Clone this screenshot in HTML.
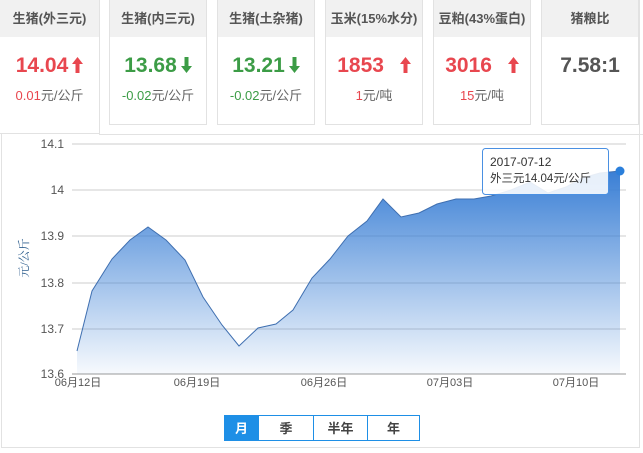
<!DOCTYPE html>
<html><head><meta charset="utf-8"><style>
body{margin:0;width:643px;height:453px;background:#fff;font-family:"Liberation Sans","Microsoft YaHei","Noto Sans CJK SC",sans-serif;position:relative;overflow:hidden}
.card{position:absolute;top:0;height:125px;width:98px;border:1px solid #e2e2e2;border-top:none;box-sizing:border-box;background:#fff;text-align:center}
.card .h{height:37px;background:#f1f1f1;line-height:37px;font-size:13px;font-weight:bold;color:#555}
.card .v{font-size:21px;font-weight:bold;margin-top:16px;height:26px;line-height:26px}
.card .v svg{vertical-align:-1px;margin-left:4px}
.card .s{font-size:13px;color:#666;margin-top:6px}
.r{color:#e8474f}.g{color:#3c9c46}
.btn{position:absolute;top:415px;height:26px;line-height:26px;text-align:center;font-size:13px;font-weight:bold;color:#444;border:1px solid #1e8fe6;box-sizing:border-box;background:#fff}
</style></head><body>
<div style="position:absolute;left:1px;top:0;width:639px;height:448px;border:1px solid #e2e2e2;border-top:none;box-sizing:border-box"></div>
<div style="position:absolute;left:99px;top:134px;width:544px;height:1px;background:#e2e2e2"></div>
<div class="card" style="left:0;width:100px;height:134px;border-left:none"><div class="h">生猪(外三元)</div><div class="v r">14.04<svg width="11" height="16" viewBox="0 0 11 16"><path d="M5.5,0 L11,7 L7.5,7 L7.5,16 L3.5,16 L3.5,7 L0,7 Z" fill="#e8474f"/></svg></div><div class="s"><span class="r">0.01</span>元/公斤</div></div>
<div class="card" style="left:109px"><div class="h">生猪(内三元)</div><div class="v g">13.68<svg width="11" height="16" viewBox="0 0 11 16"><path d="M5.5,16 L11,9 L7.5,9 L7.5,0 L3.5,0 L3.5,9 L0,9 Z" fill="#3c9c46"/></svg></div><div class="s"><span class="g">-0.02</span>元/公斤</div></div>
<div class="card" style="left:217px"><div class="h">生猪(土杂猪)</div><div class="v g">13.21<svg width="11" height="16" viewBox="0 0 11 16"><path d="M5.5,16 L11,9 L7.5,9 L7.5,0 L3.5,0 L3.5,9 L0,9 Z" fill="#3c9c46"/></svg></div><div class="s"><span class="g">-0.02</span>元/公斤</div></div>
<div class="card" style="left:325px"><div class="h">玉米(15%水分)</div><div class="v r">1853 <svg width="11" height="16" viewBox="0 0 11 16" style="margin-left:10px"><path d="M5.5,0 L11,7 L7.5,7 L7.5,16 L3.5,16 L3.5,7 L0,7 Z" fill="#e8474f"/></svg></div><div class="s"><span class="r">1</span>元/吨</div></div>
<div class="card" style="left:433px"><div class="h">豆粕(43%蛋白)</div><div class="v r">3016 <svg width="11" height="16" viewBox="0 0 11 16" style="margin-left:10px"><path d="M5.5,0 L11,7 L7.5,7 L7.5,16 L3.5,16 L3.5,7 L0,7 Z" fill="#e8474f"/></svg></div><div class="s"><span class="r">15</span>元/吨</div></div>
<div class="card" style="left:541px"><div class="h">猪粮比</div><div class="v" style="color:#555">7.58:1</div></div>
<svg style="position:absolute;left:0;top:0" width="643" height="453" font-family="Liberation Sans, Noto Sans CJK SC, sans-serif">
<defs><linearGradient id="gr" x1="0" y1="0" x2="0" y2="1"><stop offset="0" stop-color="#3a7fd5"/><stop offset="1" stop-color="#3a7fd5" stop-opacity="0.04"/></linearGradient></defs>
<g stroke="#d8d8d8" stroke-width="1.3">
<line x1="72" y1="144" x2="626" y2="144"/><line x1="72" y1="190" x2="626" y2="190"/><line x1="72" y1="236" x2="626" y2="236"/><line x1="72" y1="283" x2="626" y2="283"/><line x1="72" y1="329" x2="626" y2="329"/><line x1="72" y1="374" x2="626" y2="374" stroke="#ccc" stroke-width="2"/>
</g>
<g font-size="12" fill="#555" text-anchor="end">
<text x="64" y="148">14.1</text><text x="64" y="194">14</text><text x="64" y="240">13.9</text><text x="64" y="287">13.8</text><text x="64" y="333">13.7</text><text x="64" y="378">13.6</text></g>
<text transform="translate(28,258) rotate(-90)" font-size="12" fill="#2f5f8f" text-anchor="middle" font-family="Liberation Serif, Noto Serif CJK SC, serif">元/公斤</text>
<path d="M77,351 L92,291 L112,259 L130,240 L148,227 L166,240 L185,260 L203,297 L222,325 L239,346 L258,328 L276,324 L293,310 L312,278 L330,259 L348,236 L367,221 L383,199 L401,217 L419,213 L437,204 L456,199 L474,199 L491,196 L511,190 L530,182 L548,193 L566,187 L582,178 L600,173 L620,171 L620,374 L77,374 Z" fill="url(#gr)"/>
<path d="M77,351 L92,291 L112,259 L130,240 L148,227 L166,240 L185,260 L203,297 L222,325 L239,346 L258,328 L276,324 L293,310 L312,278 L330,259 L348,236 L367,221 L383,199 L401,217 L419,213 L437,204 L456,199 L474,199 L491,196 L511,190 L530,182 L548,193 L566,187 L582,178 L600,173 L620,171" fill="none" stroke="#3f6fb0" stroke-width="1"/>
<circle cx="620" cy="171" r="4.5" fill="#2b7fdb"/>
<rect x="482.5" y="148.5" width="126" height="46" rx="3" fill="#fff" fill-opacity="0.88" stroke="#4a90e2"/>
<text x="490" y="166" font-size="12" fill="#333">2017-07-12</text>
<text x="490" y="182" font-size="11.5" fill="#333">外三元14.04元/公斤</text>
<g font-size="11" fill="#555" text-anchor="middle">
<text x="78" y="386">06月12日</text><text x="197" y="386">06月19日</text><text x="324" y="386">06月26日</text><text x="450" y="386">07月03日</text><text x="576" y="386">07月10日</text></g>
</svg>
<div class="btn" style="left:224px;width:35px;background:#1e8fe6;color:#fff">月</div>
<div class="btn" style="left:258px;width:56px">季</div>
<div class="btn" style="left:313px;width:55px">半年</div>
<div class="btn" style="left:367px;width:53px">年</div>
</body></html>
